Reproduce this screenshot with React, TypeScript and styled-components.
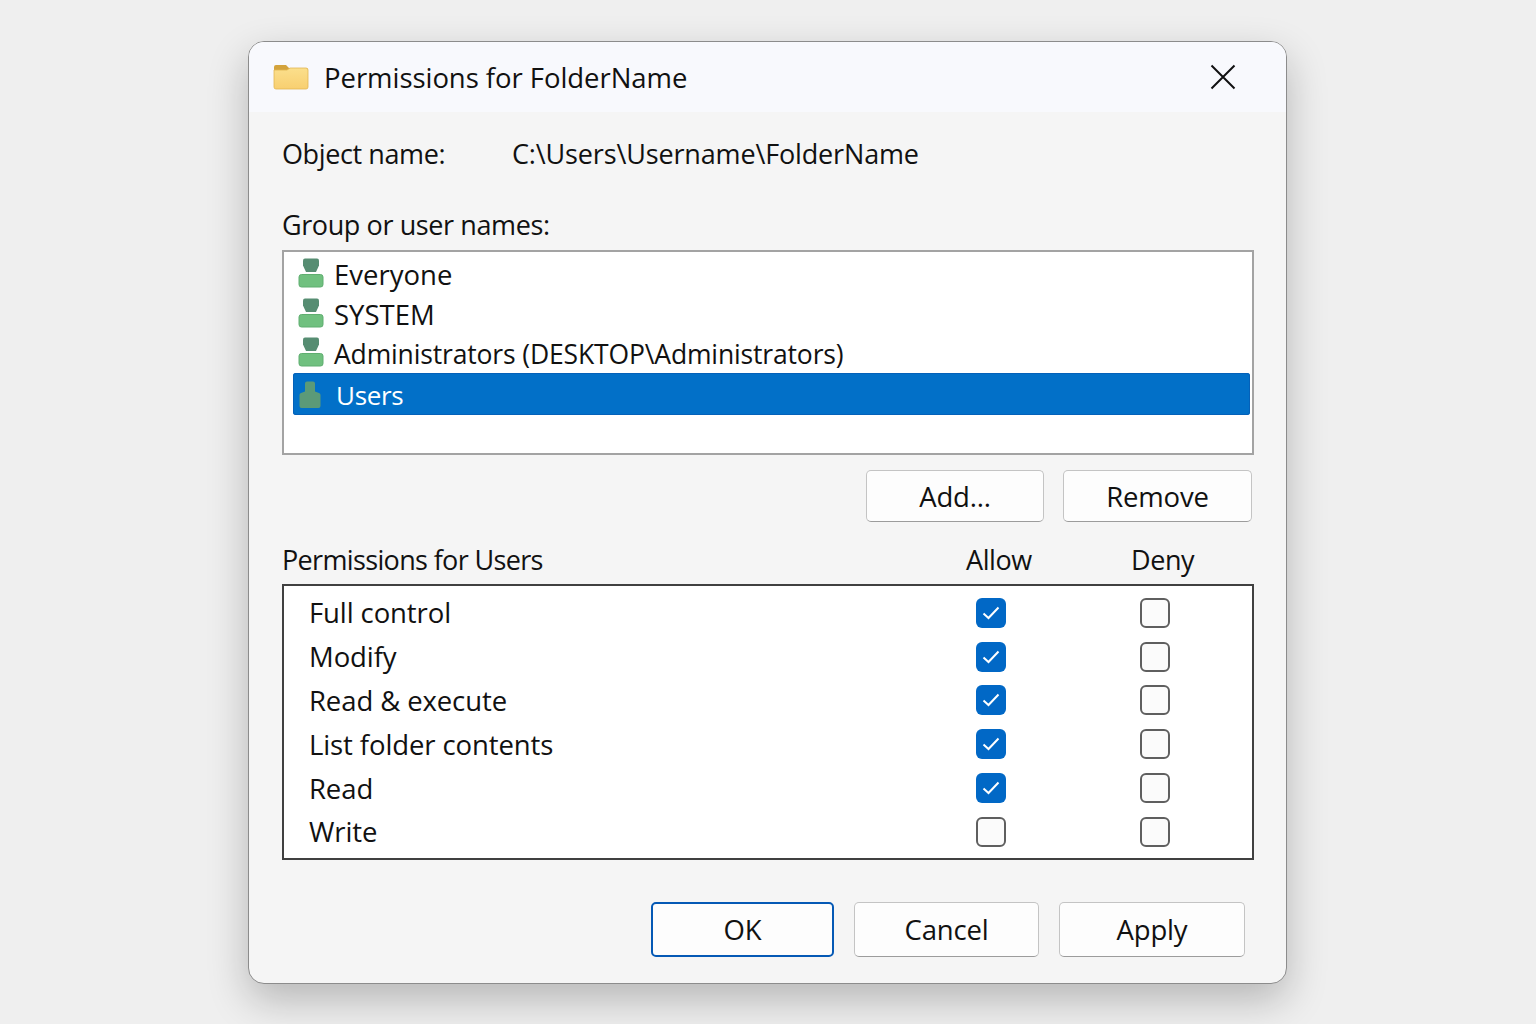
import styled, { createGlobalStyle } from "styled-components";

const GlobalStyle = createGlobalStyle`
  html, body {
    margin: 0;
    padding: 0;
    background: #f0f0f0;
  }
  body {
    font-family: "Open Sans", "Noto Sans", "Liberation Sans", sans-serif;
    color: #111;
  }
`;

const Page = styled.div`
  height: 1024px;
  overflow: hidden;
  padding-top: 41px;
  box-sizing: border-box;
  background: #efefef;
  display: flex;
  justify-content: center;
  align-items: flex-start;
`;

const Dialog = styled.div`
  width: 1039px;
  height: 943px;
  margin-right: 1px;
  box-sizing: border-box;
  background: #f5f5f5;
  border: 1.5px solid #8c8c8c;
  border-radius: 16px;
  box-shadow: 0 16px 40px rgba(0, 0, 0, 0.24);
  overflow: hidden;
  display: flex;
  flex-direction: column;
`;

const TitleBar = styled.header`
  height: 70px;
  flex: none;
  background: #f8f9fd;
  display: flex;
  align-items: center;
  padding: 0 50px 0 24px;
  gap: 15px;
`;

const Title = styled.h1`
  flex: 1;
  margin: 0;
  font-size: 27.5px;
  font-weight: 400;
  letter-spacing: -0.05px;
`;

const Body = styled.main`
  flex: 1;
  padding: 0 32px 0 33px;
  display: flex;
  flex-direction: column;
`;

const Label = styled.div`
  font-size: 27px;
  line-height: 36px;
  letter-spacing: -0.4px;
`;

const PathLabel = styled(Label)`
  letter-spacing: -0.15px;
`;

const PermLabel = styled(Label)`
  letter-spacing: -0.65px;
`;

const ObjectRow = styled.div`
  display: grid;
  grid-template-columns: 230px 1fr;
  margin-top: 24px;
`;

const GroupLabel = styled(Label)`
  margin-top: 35px;
`;

const ListBox = styled.div`
  margin-top: 7px;
  height: 205px;
  box-sizing: border-box;
  background: #fff;
  border: 2px solid #a3a3a3;
  padding: 2px 2px 0 9px;
`;

const ListRow = styled.div<{ $height: number; $size: number; $spacing: number }>`
  height: ${(p) => p.$height}px;
  display: flex;
  align-items: center;
  gap: 10px;
  padding-left: 5px;
  font-size: ${(p) => p.$size}px;
  letter-spacing: ${(p) => p.$spacing}px;
`;

const SelectedRow = styled.div`
  height: 42px;
  box-sizing: border-box;
  padding: 2px 0 0 6px;
  display: flex;
  align-items: center;
  gap: 15px;
  font-size: 26px;
  letter-spacing: -0.3px;
  border-radius: 3px;
  background: #0270c8;
  box-shadow: inset 0 0 0 1px #0461b9;
  color: #fff;
`;

const ButtonRow = styled.div`
  margin-top: 15px;
  padding-right: 2px;
  display: flex;
  justify-content: flex-end;
  gap: 19px;
`;

const Button = styled.button<{ $width: number; $height: number; $primary?: boolean }>`
  width: ${(p) => p.$width}px;
  height: ${(p) => p.$height}px;
  padding: 0;
  box-sizing: border-box;
  font: inherit;
  font-size: 27.5px;
  letter-spacing: -0.2px;
  color: #111;
  background: #fdfdfd;
  border-radius: 5px;
  border: ${(p) => (p.$primary ? "2px solid #0559b5" : "1.5px solid #c4c4c4")};
  border-bottom-color: ${(p) => (p.$primary ? "#0559b5" : "#9c9c9c")};
`;

const PermHeader = styled.div`
  margin-top: 20px;
  display: grid;
  grid-template-columns: 684px 165px 1fr;
  padding-bottom: 6px;
`;

const PermTable = styled.div`
  height: 276px;
  box-sizing: border-box;
  background: #fff;
  border: 2px solid #404040;
  padding: 5px 0 0 25px;
`;

const PermRow = styled.div`
  height: 43.8px;
  display: grid;
  grid-template-columns: 667px 164px 30px;
  align-items: center;
  font-size: 27.5px;
  letter-spacing: -0.1px;
`;

const Check = styled.span<{ $checked?: boolean }>`
  width: 30px;
  height: 30px;
  box-sizing: border-box;
  border-radius: 6px;
  display: flex;
  align-items: center;
  justify-content: center;
  background: ${(p) => (p.$checked ? "#0168c6" : "#fbfbfb")};
  border: ${(p) => (p.$checked ? "none" : "2px solid #5f5f5f")};
`;

const Footer = styled.footer`
  margin-top: 42px;
  padding-right: 9px;
  display: flex;
  justify-content: flex-end;
  gap: 20px;
`;

const UserGlyph = styled.svg`
  flex: none;
  margin-top: -3px;
`;

const FolderIcon = () => (
  <svg width="36" height="26" viewBox="0 0 36 26">
    <defs>
      <linearGradient id="folderFill" x1="0" y1="0" x2="0" y2="1">
        <stop offset="0" stopColor="#fbdf8c" />
        <stop offset="1" stopColor="#f8cf70" />
      </linearGradient>
    </defs>
    <path d="M1 3a2 2 0 0 1 2-2h10l3 3h17a2 2 0 0 1 2 2v4H1z" fill="#d3a33c" />
    <path d="M1 6h13l3-2h16a2 2 0 0 1 2 2v17a2 2 0 0 1-2 2H3a2 2 0 0 1-2-2z" fill="url(#folderFill)" stroke="#e2b650" strokeWidth="0.8" />
  </svg>
);

const CloseIcon = () => (
  <svg width="26" height="26" viewBox="0 0 26 26" fill="none" stroke="#111" strokeWidth="2">
    <path d="M1.5 1.5l23 23M24.5 1.500l-23 23" />
  </svg>
);

const UserIcon = () => (
  <UserGlyph width="26" height="30" viewBox="0 0 26 30">
    <path d="M5 2.500a2 2 0 0 1 2-2h12a2 2 0 0 1 2 2v5l-3 6.500H8l-3-6.500z" fill="#568d72" />
    <rect x="1" y="16.500" width="24" height="12.500" rx="2.500" fill="#70c07f" stroke="#5fae70" />
  </UserGlyph>
);

const SelectedUserIcon = () => (
  <svg width="22" height="28" viewBox="0 0 22 28">
    <path d="M6 2.500a2 2 0 0 1 2-2h6a2 2 0 0 1 2 2v8l4 1.500a2 2 0 0 1 1.500 2V25a2 2 0 0 1-2 2H2.500a2 2 0 0 1-2-2V14a2 2 0 0 1 1.500-2l4-1.500z" fill="#5b9a78" />
  </svg>
);

const CheckMark = () => (
  <svg width="18" height="14" viewBox="0 0 18 14" fill="none" stroke="#fff" strokeWidth="2">
    <path d="M1.500 7.500l5 4.500 10-10.500" />
  </svg>
);

const users = [
  { name: "Everyone", height: 40, size: 27.5, spacing: 0 },
  { name: "SYSTEM", height: 40, size: 27.5, spacing: 0 },
  { name: "Administrators (DESKTOP\\Administrators)", height: 39, size: 26.5, spacing: -0.15 },
];

const permissions = [
  { name: "Full control", allow: true },
  { name: "Modify", allow: true },
  { name: "Read & execute", allow: true },
  { name: "List folder contents", allow: true },
  { name: "Read", allow: true },
  { name: "Write", allow: false },
];

export default function App() {
  return (
    <Page>
      <GlobalStyle />
      <Dialog>
        <TitleBar>
          <FolderIcon />
          <Title>Permissions for FolderName</Title>
          <CloseIcon />
        </TitleBar>
        <Body>
          <ObjectRow>
            <Label>Object name:</Label>
            <PathLabel>C:\Users\Username\FolderName</PathLabel>
          </ObjectRow>
          <GroupLabel>Group or user names:</GroupLabel>
          <ListBox>
            {users.map((u) => (
              <ListRow key={u.name} $height={u.height} $size={u.size} $spacing={u.spacing}>
                <UserIcon />
                {u.name}
              </ListRow>
            ))}
            <SelectedRow>
              <SelectedUserIcon />
              <span>Users</span>
            </SelectedRow>
          </ListBox>
          <ButtonRow>
            <Button $width={178} $height={52}>Add...</Button>
            <Button $width={189} $height={52}>Remove</Button>
          </ButtonRow>
          <PermHeader>
            <PermLabel>Permissions for Users</PermLabel>
            <Label>Allow</Label>
            <Label>Deny</Label>
          </PermHeader>
          <PermTable>
            {permissions.map((p) => (
              <PermRow key={p.name}>
                <span>{p.name}</span>
                <Check $checked={p.allow}>{p.allow && <CheckMark />}</Check>
                <Check />
              </PermRow>
            ))}
          </PermTable>
          <Footer>
            <Button $primary $width={183} $height={55}>OK</Button>
            <Button $width={185} $height={55}>Cancel</Button>
            <Button $width={186} $height={55}>Apply</Button>
          </Footer>
        </Body>
      </Dialog>
    </Page>
  );
}
